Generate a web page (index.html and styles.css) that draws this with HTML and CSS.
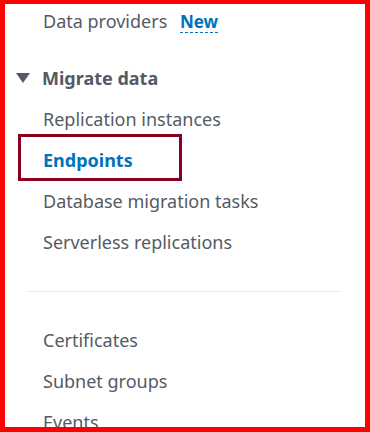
FILE: index.html
```html
<!DOCTYPE html>
<html>
<head>
<meta charset="utf-8">
<link rel="stylesheet" href="styles.css">
</head>
<body>
<div class="frame">
  <nav class="nav">
    <div class="item first">Data providers <span class="badge">New</span></div>
    <div class="section">
      <svg class="caret" width="14" height="10" viewBox="0 0 14 10"><polygon points="0,0 14,0 7,10" fill="#545b64"/></svg>
      <span>Migrate data</span>
    </div>
    <div class="item">Replication instances</div>
    <div class="item active">Endpoints</div>
    <div class="item">Database migration tasks</div>
    <div class="item">Serverless replications</div>
    <hr class="divider">
    <div class="item">Certificates</div>
    <div class="item">Subnet groups</div>
    <div class="item">Events</div>
  </nav>
</div>
</body>
</html>
```
FILE: styles.css
```css
html, body {
  margin: 0;
  padding: 0;
  background: #ffffff;
}
.frame {
  width: 370px;
  height: 432px;
  box-sizing: border-box;
  border-style: solid;
  border-color: #ff0000;
  border-width: 4px 5px 5px 5px;
  overflow: hidden;
  background: #ffffff;
  font-family: "Noto Sans", "Open Sans", sans-serif;
  font-size: 18px;
  color: #545b64;
}
.nav {
  display: flex;
  flex-direction: column;
  padding-top: 1px;
}
.item {
  height: 41px;
  line-height: 41px;
  padding-left: 38px;
  white-space: nowrap;
  position: relative;
}
.item.first {
  height: 32px;
  line-height: 32px;
}
.badge {
  color: #0073bb;
  font-weight: 700;
  font-size: 17px;
  margin-left: 8px;
  border-bottom: 1px dashed #0073bb;
  line-height: 1.2;
  display: inline-block;
}
.section {
  margin-top: 20px;
  margin-bottom: 1px;
  height: 41px;
  display: flex;
  align-items: center;
  gap: 12px;
  padding-left: 11px;
  font-weight: 700;
}
.caret {
  display: block;
}
.item.active {
  color: #0073bb;
  font-weight: 700;
}
.item.active::after {
  content: "";
  position: absolute;
  left: 13px;
  top: -6px;
  width: 158px;
  height: 41px;
  border: 3px solid #8b0020;
}
.divider {
  border: 0;
  border-top: 1px solid #e9ebed;
  margin: 28px 23px 28px 22px;
  height: 0;
}
```
